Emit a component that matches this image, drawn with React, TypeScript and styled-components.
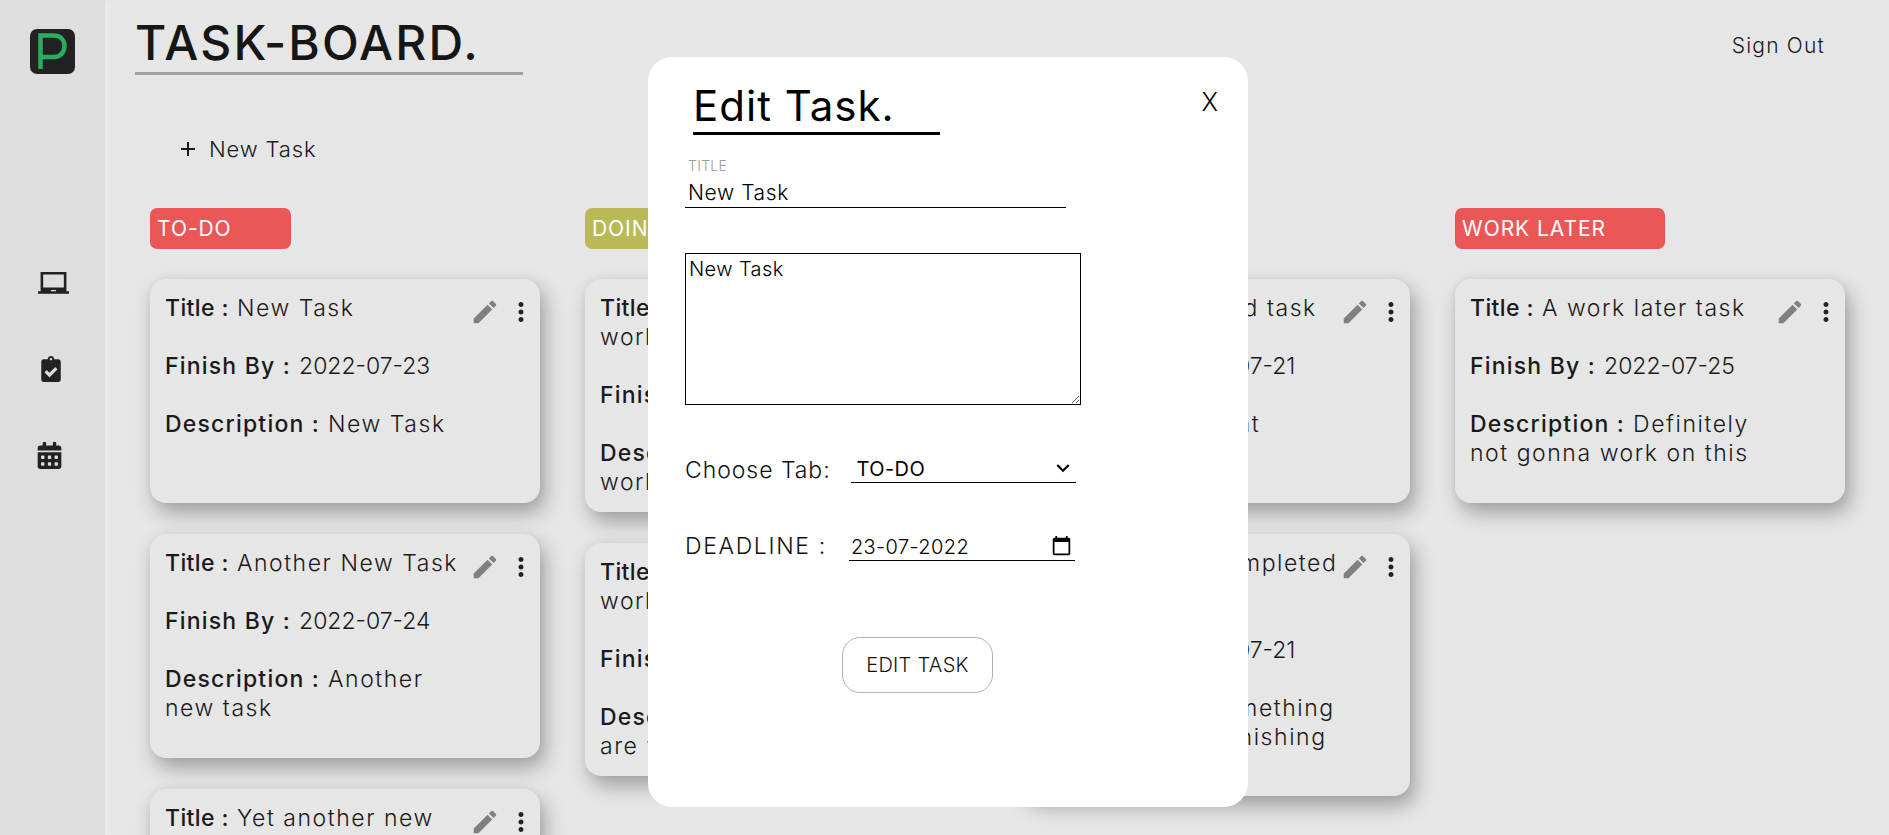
import { createGlobalStyle, styled } from 'styled-components';
import { FaCalendarAlt, FaClipboardCheck } from 'react-icons/fa';
import { MdAdd, MdCalendarToday, MdEdit, MdKeyboardArrowDown, MdLaptopChromebook, MdMoreVert } from 'react-icons/md';

const GlobalStyle = createGlobalStyle`
    html, body {
        margin: 0;
        height: 100%;
        overflow: hidden;
        background-color: #e6e6e6;
        font-family: Inter, "Open Sans", sans-serif;
        color: #1a1a1a;
    }
`;

const Page = styled.div`
    position: relative;
    display: flex;
    height: 835px;
    overflow: hidden;
`;

const Sidebar = styled.aside`
    flex: 0 0 105px;
    display: flex;
    flex-direction: column;
    padding: 29px 0 0 30px;
    box-sizing: border-box;
    background-color: #dedede;
    box-shadow: 3px 0 6px rgba(255, 255, 255, 0.35);
`;

const Logo = styled.svg`
    display: block;
    width: 45px;
    height: 45px;
`;

const Nav = styled.nav`
    display: flex;
    flex-direction: column;
    margin-top: 194px;
    color: #222;
`;

const NavItem = styled.div<{ $left: number }>`
    display: flex;
    align-items: center;
    height: 30px;
    margin-bottom: 56px;
    margin-left: ${(props) => props.$left}px;
`;

const Main = styled.main`
    flex: 1;
    min-width: 0;
    padding: 0 64px 0 30px;
`;

const Header = styled.header`
    display: flex;
    justify-content: space-between;
    height: 76px;
`;

const BoardTitle = styled.h1`
    box-sizing: border-box;
    width: 388px;
    height: 75px;
    margin: 0;
    padding-top: 16px;
    font-size: 48px;
    line-height: 54px;
    font-weight: 500;
    letter-spacing: 2.15px;
    color: #161616;
    border-bottom: 3px solid #a0a0a0;
`;

const SignOut = styled.button`
    align-self: flex-start;
    margin: 33px 0 0;
    padding: 0;
    border: none;
    background: none;
    font-family: inherit;
    font-size: 21px;
    line-height: 26px;
    font-weight: 300;
    letter-spacing: 1.2px;
    color: #1a1a1a;
`;

const NewTask = styled.div`
    display: flex;
    align-items: center;
    gap: 9px;
    height: 30px;
    margin: 58px 0 0 41px;
    font-size: 22px;
    font-weight: 300;
    letter-spacing: 0.85px;
`;

const Board = styled.div`
    display: grid;
    grid-template-columns: repeat(4, 390px);
    column-gap: 45px;
    margin: 44px 0 0 15px;
`;

const Column = styled.section`
    display: flex;
    flex-direction: column;
    align-items: flex-start;
`;

const Tag = styled.div<{ $color: string }>`
    box-sizing: border-box;
    height: 41px;
    padding: 0 59px 0 7px;
    margin-bottom: 30px;
    border-radius: 7px;
    background-color: ${(props) => props.$color};
    color: #fff;
    font-size: 21px;
    line-height: 41px;
    font-weight: 400;
    letter-spacing: 0.95px;
    white-space: nowrap;
`;

const Card = styled.article`
    box-sizing: border-box;
    width: 390px;
    min-height: 224px;
    display: flex;
    justify-content: space-between;
    padding: 15px 4px 15px 15px;
    margin-bottom: 31px;
    border-radius: 16px;
    background-color: #e6e6e6;
    box-shadow: 5px 10px 20px rgba(0, 0, 0, 0.3), 0 0 8px rgba(0, 0, 0, 0.05);
`;

const CardBody = styled.div`
    width: 306px;
`;

const Line = styled.p`
    margin: 0 0 29px;
    font-size: 23px;
    line-height: 29px;
    font-weight: 300;
    letter-spacing: 1.55px;

    &:last-child {
        margin-bottom: 0;
    }
`;

const Label = styled.strong`
    font-weight: 500;
    letter-spacing: 1.2px;
`;

const TitleLabel = styled(Label)`
    letter-spacing: 0.4px;
`;

const DateText = styled.span`
    letter-spacing: 0;
`;

const CardActions = styled.div`
    flex: none;
    display: flex;
    margin-left: -8px;
    gap: 6px;
    height: 30px;
    margin-top: 3px;
`;

const Modal = styled.div`
    position: absolute;
    top: 57px;
    left: 648px;
    box-sizing: border-box;
    width: 600px;
    height: 750px;
    padding: 0 0 0 37px;
    border-radius: 24px;
    background-color: #fff;
    color: #000;
`;

const ModalHeading = styled.div`
    display: flex;
    justify-content: space-between;
    padding: 22px 0 0 8px;
`;

const ModalTitle = styled.h2`
    box-sizing: border-box;
    width: 247px;
    height: 56px;
    margin: 0;
    padding-top: 2px;
    font-size: 42px;
    line-height: 50px;
    font-weight: 400;
    letter-spacing: 1px;
    border-bottom: 3px solid #000;
`;

const CloseButton = styled.button`
    height: 30px;
    margin: 8px 21px 0 0;
    padding: 0 9px;
    border: none;
    background: none;
    font-family: inherit;
    font-size: 25px;
    font-weight: 300;
    color: #000;
`;

const FieldLabel = styled.label`
    display: block;
    margin: 22px 0 0 3px;
    font-size: 14px;
    line-height: 17px;
    font-weight: 300;
    letter-spacing: 0.3px;
    color: #9a9a9a;
`;

const TitleInput = styled.input`
    display: block;
    box-sizing: border-box;
    width: 381px;
    height: 34px;
    padding: 4px 3px 0;
    border: none;
    border-bottom: 1px solid #000;
    outline: none;
    font-family: inherit;
    font-size: 21px;
    font-weight: 300;
    letter-spacing: 0.6px;
    color: #000;
`;

const Description = styled.textarea`
    display: block;
    box-sizing: border-box;
    width: 396px;
    height: 152px;
    margin-top: 45px;
    padding: 3px 3px;
    border: 1px solid #000;
    outline: none;
    font-family: inherit;
    font-size: 20px;
    line-height: 24px;
    font-weight: 300;
    letter-spacing: 0.4px;
    color: #000;
`;

const FormRow = styled.div<{ $top: number; $gap: number }>`
    display: flex;
    align-items: flex-end;
    gap: ${(props) => props.$gap}px;
    height: 32px;
    margin-top: ${(props) => props.$top}px;
`;

const RowLabel = styled.label<{ $spacing: number }>`
    font-size: 23px;
    line-height: 30px;
    font-weight: 300;
    letter-spacing: ${(props) => props.$spacing}px;
    color: #111;
`;

const SelectWrap = styled.div`
    position: relative;
    width: 225px;
    height: 28px;
    margin-bottom: 2px;
`;

const TabSelect = styled.select`
    display: block;
    box-sizing: border-box;
    width: 100%;
    height: 28px;
    padding: 0 0 0 6px;
    border: none;
    border-bottom: 1px solid #000;
    border-radius: 0;
    outline: none;
    appearance: none;
    background-color: #fff;
    font-family: inherit;
    font-size: 20px;
    font-weight: 400;
    letter-spacing: 0.4px;
    color: #000;
`;

const SelectArrow = styled.span`
    position: absolute;
    top: 0;
    right: 0;
    display: flex;
    pointer-events: none;
`;

const DateField = styled.div`
    box-sizing: border-box;
    width: 226px;
    height: 30px;
    display: flex;
    align-items: center;
    justify-content: space-between;
    padding: 0 3px 0 2px;
    border-bottom: 1px solid #000;
`;

const DateInput = styled.input`
    width: 180px;
    padding: 2px 0 0;
    border: none;
    outline: none;
    font-family: inherit;
    font-size: 20px;
    font-weight: 300;
    letter-spacing: 0.4px;
    color: #000;
`;

const ButtonRow = styled.div`
    display: flex;
    margin: 76px 0 0 157px;
`;

const SubmitButton = styled.button`
    width: 151px;
    height: 56px;
    border: 1px solid #b0b0b0;
    border-radius: 18px;
    background-color: #fff;
    font-family: inherit;
    font-size: 20px;
    font-weight: 300;
    letter-spacing: 0.3px;
    color: #111;
`;

type Task = {
    title: string;
    date: string;
    description: string;
};

const columns: { name: string; color: string; tasks: Task[] }[] = [
    {
        name: 'TO-DO',
        color: '#eb5757',
        tasks: [
            { title: 'New Task', date: '2022-07-23', description: 'New Task' },
            { title: 'Another New Task', date: '2022-07-24', description: 'Another new task' },
            { title: 'Yet another new task', date: '2022-07-24', description: 'Yet another' },
        ],
    },
    {
        name: 'DOING',
        color: '#b9b957',
        tasks: [
            { title: 'Something I am working on', date: '2022-07-22', description: 'I am still working on it' },
            { title: 'Something else, working on it', date: '2022-07-22', description: 'Things that are very hard' },
        ],
    },
    {
        name: 'DONE',
        color: '#27ae60',
        tasks: [
            { title: 'A completed task', date: '2022-07-21', description: 'Treat' },
            { title: 'Another completed task', date: '2022-07-21', description: '\u00a0Something that she needs finishing soon' },
        ],
    },
    {
        name: 'WORK LATER',
        color: '#eb5757',
        tasks: [
            { title: 'A work later task', date: '2022-07-25', description: 'Definitely not gonna work on this' },
        ],
    },
];

export default function App() {
    return (
        <Page>
            <GlobalStyle />
            <Sidebar>
                <Logo viewBox="0 0 45 45">
                    <rect width="45" height="45" rx="7" fill="#222" />
                    <path d="M10.500 40V6.500H24c6.500 0 10.500 4.500 10.500 10.500S30.500 28 24 28H10.500" fill="none" stroke="#27ae60" strokeWidth="4.500" />
                </Logo>
                <Nav>
                    <NavItem $left={8}><MdLaptopChromebook size={31} /></NavItem>
                    <NavItem $left={8}><FaClipboardCheck size={26} /></NavItem>
                    <NavItem $left={6}><FaCalendarAlt size={27} /></NavItem>
                </Nav>
            </Sidebar>
            <Main>
                <Header>
                    <BoardTitle>TASK-BOARD.</BoardTitle>
                    <SignOut>Sign Out</SignOut>
                </Header>
                <NewTask>
                    <MdAdd size={24} />
                    New Task
                </NewTask>
                <Board>
                    {columns.map((column) => (
                        <Column key={column.name}>
                            <Tag $color={column.color}>{column.name}</Tag>
                            {column.tasks.map((task) => (
                                <Card key={task.title}>
                                    <CardBody>
                                        <Line><TitleLabel>Title :</TitleLabel> {task.title}</Line>
                                        <Line><Label>Finish By :</Label> <DateText>{task.date}</DateText></Line>
                                        <Line><Label>Description :</Label> {task.description}</Line>
                                    </CardBody>
                                    <CardActions>
                                        <MdEdit size={30} color="#808080" />
                                        <MdMoreVert size={30} color="#222" />
                                    </CardActions>
                                </Card>
                            ))}
                        </Column>
                    ))}
                </Board>
            </Main>
            <Modal>
                <ModalHeading>
                    <ModalTitle>Edit Task.</ModalTitle>
                    <CloseButton>X</CloseButton>
                </ModalHeading>
                <FieldLabel htmlFor="edit-title">TITLE</FieldLabel>
                <TitleInput id="edit-title" defaultValue="New Task" />
                <Description defaultValue="New Task" />
                <FormRow $top={48} $gap={20}>
                    <RowLabel htmlFor="edit-tab" $spacing={0.95}>Choose Tab:</RowLabel>
                    <SelectWrap>
                        <TabSelect id="edit-tab" defaultValue="TO-DO">
                            {columns.map((column) => (
                                <option key={column.name}>{column.name}</option>
                            ))}
                        </TabSelect>
                        <SelectArrow><MdKeyboardArrowDown size={26} /></SelectArrow>
                    </SelectWrap>
                </FormRow>
                <FormRow $top={44} $gap={22}>
                    <RowLabel htmlFor="edit-date" $spacing={1.65}>DEADLINE :</RowLabel>
                    <DateField>
                        <DateInput id="edit-date" defaultValue="23-07-2022" />
                        <MdCalendarToday size={21} />
                    </DateField>
                </FormRow>
                <ButtonRow>
                    <SubmitButton>EDIT TASK</SubmitButton>
                </ButtonRow>
            </Modal>
        </Page>
    );
}
